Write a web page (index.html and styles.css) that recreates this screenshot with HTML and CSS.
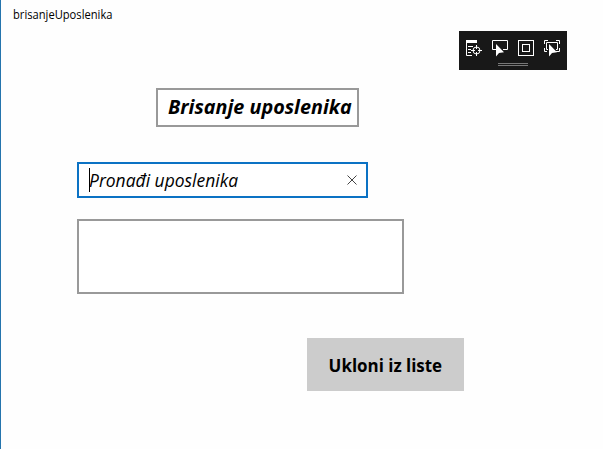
FILE: index.html
```html
<!DOCTYPE html>
<html lang="bs">
<head>
<meta charset="utf-8">
<title>brisanjeUposlenika</title>
<link rel="stylesheet" href="styles.css">
</head>
<body>
<div class="window">
  <header class="titlebar"><span class="app-name">brisanjeUposlenika</span></header>
  <main class="page">
    <div class="heading"><span class="heading-text">Brisanje uposlenika</span></div>
    <div class="search">
      <span class="caret"></span>
      <span class="search-text">Pronađi uposlenika</span>
      <svg class="clear" width="10" height="10" viewBox="0 0 10 10"><path d="M.5.5l9 9M9.5.5l-9 9"/></svg>
    </div>
    <div class="list"></div>
    <button class="remove"><span class="remove-text">Ukloni iz liste</span></button>
  </main>
  <div class="debug-bar">
    <svg width="108" height="39" viewBox="0 0 108 39">
      <g class="line">
        <path d="M7.5 12v12.5H13M9 15.5h5M9 18.5h3M9 21.5h3"/>
        <circle cx="17.500" cy="19.500" r="3.500"/>
        <path d="M17.500 14v4M17.500 21v4M12 19.500h4M19 19.500h4"/>
        <path d="M37 18.500h-3.500v-9h15v9H44"/>
        <rect x="59.500" y="9.500" width="15" height="15"/>
        <rect x="63.500" y="13.500" width="7" height="7"/>
        <path d="M85.500 13V9.500H89M97 9.500h3.500V13M85.500 17v3.500H88M97 20.500h3.500V17"/>
        <path d="M89 18.500h-1.500v-7h11v7H97"/>
      </g>
      <path class="fill" d="M7 9h11v3H7zM37 13v12.500l3-3.500 5-.8zM90 13v12.500l3-3.500 5-.8z"/>
      <path class="grip" d="M39 32.500h30M39 34.500h30"/>
    </svg>
  </div>
</div>
</body>
</html>
```
FILE: styles.css
```css
* { box-sizing: border-box; }
body {
  margin: 0;
  background: #fefefe;
  color: #000;
  font-family: "Open Sans", "Noto Sans", sans-serif;
}
.window {
  position: relative;
  height: 449px;
  border-left: 1px solid #2474ad;
  overflow: hidden;
}
.titlebar {
  display: flex;
  height: 31px;
  padding: 7px 0 0 12px;
  font-size: 12px;
  line-height: 16px;
}
.page {
  display: flex;
  flex-direction: column;
  align-items: flex-start;
  padding: 57px 0 0 76px;
}
.heading {
  width: 203px;
  height: 39px;
  margin-left: 79px;
  padding-left: 10px;
  border: 2px solid #999;
  background: #fff;
  font-size: 19px;
  font-style: italic;
  font-weight: 700;
  line-height: 34px;
  white-space: nowrap;
}
.search {
  display: flex;
  align-items: center;
  width: 291px;
  height: 36px;
  margin-top: 35px;
  padding: 0 9px 0 10px;
  border: 2px solid #0b72c4;
  background: #fff;
  font-size: 18px;
  font-style: italic;
  line-height: 32px;
  white-space: nowrap;
}
.caret {
  width: 1px;
  height: 24px;
  margin-right: -1px;
  background: #000;
}
.clear {
  margin-left: auto;
  fill: none;
  stroke: #444;
}
.list {
  width: 327px;
  height: 75px;
  margin-top: 21px;
  border: 2px solid #999;
  background: #fff;
}
.remove {
  width: 157px;
  height: 53px;
  margin: 44px 0 0 230px;
  padding: 0;
  border: 0;
  background: #ccc;
  color: #000;
  font: 700 18px/30px "Open Sans", "Noto Sans", sans-serif;
  white-space: nowrap;
}
.app-name, .heading-text, .search-text, .remove-text {
  display: inline-block;
  transform-origin: left center;
}
.app-name { transform: scaleX(.93); }
.heading-text { transform: scaleX(1.04); }
.search-text { transform: scaleX(.97); }
.remove-text {
  transform: scaleX(.94);
  transform-origin: center;
}
.debug-bar {
  position: absolute;
  top: 31px;
  left: 458px;
  width: 108px;
  height: 39px;
  background: #181818;
}
.debug-bar svg { display: block; }
.line { fill: none; stroke: #fff; }
.fill { fill: #fff; }
.grip { stroke: #777; }
```
